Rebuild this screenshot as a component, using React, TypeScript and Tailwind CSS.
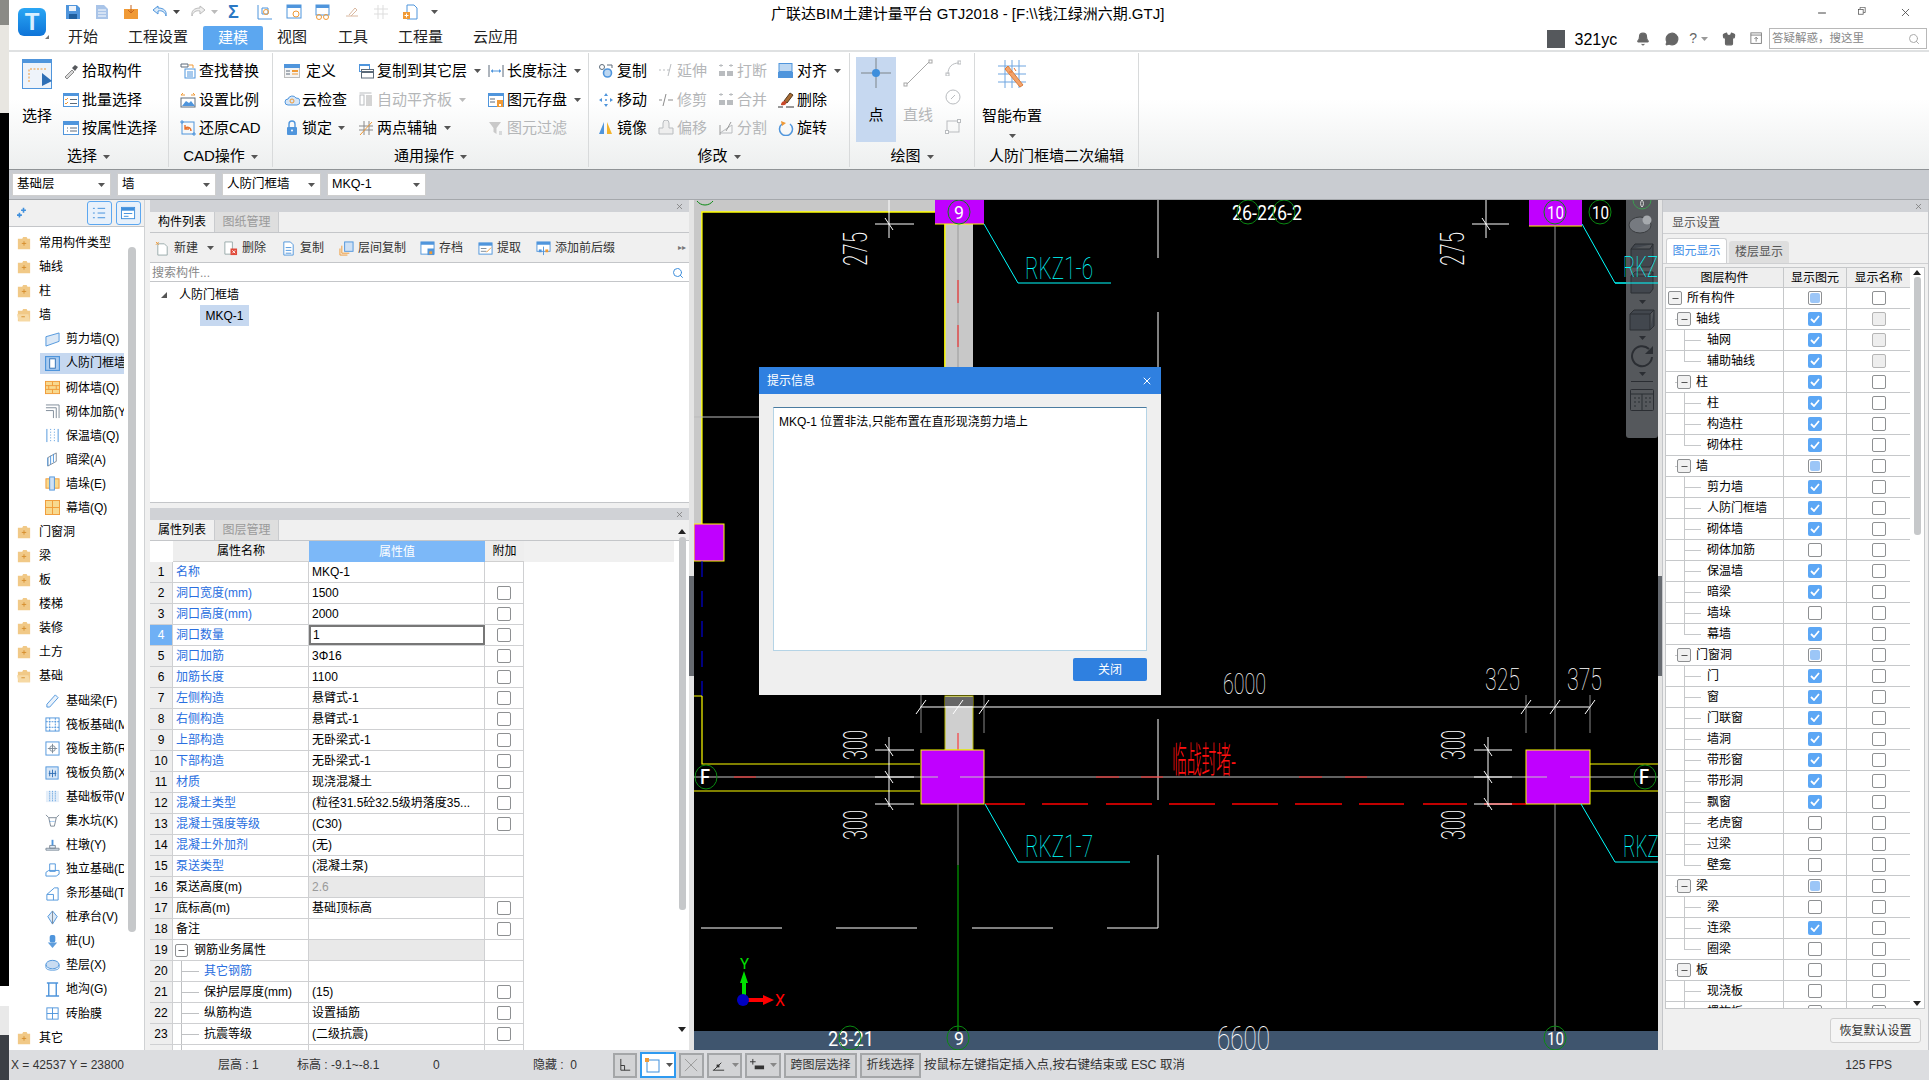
import React from "react"
import { Search, X, Bell, MessageCircle, Shirt, Minus } from "lucide-react"

type P = { children?: React.ReactNode; className?: string }

const Svg = ({ children, s = 16, w, h, vb = "0 0 16 16", className = "" }: P & { s?: number; w?: number; h?: number; vb?: string }) => (
  <svg width={w ?? s} height={h ?? s} viewBox={vb} fill="none" className={`shrink-0 ${className}`}>
    {children}
  </svg>
)

const BL = "#4f95dc"
const OR = "#f09a36"
const GY = "#b9bcbf"
const DK = "#5c6b7a"

const icons: Record<string, React.ReactNode> = {
  pick: <><path d="M2 14l7-7 2 2-7 7z" fill="#d8d8d8" stroke="#8a8a8a" /><path d="M9 5l3-3 3 2-3 4z" fill="#55585c" /></>,
  batch: <><rect x="0.5" y="1.5" width="15" height="13" fill="#fff" stroke={BL} /><rect x="0" y="1" width="16" height="3" fill={BL} /><path d="M2 7l1 1 2-2M2 11l1 1 2-2" stroke={OR} /><path d="M7 7.5h7M7 11.5h7" stroke={DK} /></>,
  attr: <><rect x="0.5" y="1.5" width="15" height="13" fill="#fff" stroke={BL} /><rect x="0" y="1" width="16" height="4" fill={BL} /><path d="M4 8h1M7 8h7M4 11h1M7 11h7" stroke={DK} /></>,
  find: <><path d="M1 1h7v3H1z" stroke={DK} /><path d="M9 2h4v3" stroke={OR} /><rect x="5" y="6" width="10" height="9" fill="#fff" stroke={BL} /><path d="M7 9h6M7 11h6M7 13h6" stroke={BL} /></>,
  scale: <><path d="M1 3h4M1 3l2-2M11 3h4M15 3l-2-2" stroke={OR} /><rect x="1" y="6" width="14" height="9" fill="#fff" stroke={DK} /><path d="M2 14l4-5 3 2 2-2 4 5z" fill={BL} /></>,
  cad: <><rect x="2" y="2" width="12" height="12" stroke={BL} /><path d="M0 2h4M2 0v4M12 14h4M14 12v4" stroke={BL} /><path d="M11 11c0-4-5-5-6-2M5 5v4h4" stroke="#e8702a" strokeWidth="1.4" /></>,
  def: <><rect x="0.5" y="1.5" width="15" height="13" fill="#f4f4f4" stroke="#bcbcbc" /><rect x="0" y="1" width="16" height="4" fill={BL} /><path d="M2 8h4M2 11h4" stroke={DK} /><path d="M8 7h6v2H8z" fill={OR} /><path d="M8 11h6" stroke={OR} /></>,
  cloud: <><path d="M4 13a3 3 0 010-6 4.5 4.5 0 018-1 3.5 3.5 0 011 7z" fill="#d6e6f7" stroke={BL} /><circle cx="8" cy="9" r="2" stroke={OR} /></>,
  lock: <><rect x="3" y="7" width="10" height="8" rx="1" fill={BL} /><path d="M5 7V4a3 3 0 016 0v3" stroke={BL} strokeWidth="1.4" /><circle cx="8" cy="10.5" r="1" fill="#fff" /></>,
  copylayer: <><rect x="1" y="1" width="11" height="8" fill={BL} /><rect x="2" y="3" width="9" height="5" fill="#fff" /><rect x="3.5" y="6.5" width="12" height="8.5" fill="#fff" stroke={DK} /><path d="M3.5 9h12" stroke={DK} strokeWidth="2" /></>,
  align: <><path d="M1.5 1h12" stroke={GY} /><rect x="2" y="3" width="4" height="10" stroke={GY} /><rect x="8" y="3" width="6" height="11" fill="#d4d4d4" /></>,
  axis: <><path d="M1 6h14M1 10h14M6 1v14M11 1v14" stroke="#8a8a8a" /><path d="M2 15L14 2" stroke={OR} /></>,
  dim: <><path d="M1 2v12M15 2v12" stroke={DK} /><path d="M3 8h10" stroke={BL} /><path d="M3 8l2-2v4zM13 8l-2-2v4z" fill={BL} /></>,
  save: <><rect x="0.5" y="1.5" width="15" height="13" fill="#fff" stroke={BL} /><rect x="0" y="1" width="16" height="3" fill={BL} /><path d="M2 7h5M2 10h5" stroke={DK} /><rect x="9" y="8" width="6" height="7" fill={OR} /><rect x="11" y="12" width="2" height="2" fill="#fff" /></>,
  filter: <><path d="M1 2h12L8.5 8v6l-3-2V8z" fill="#c9c9c9" /><path d="M11 12h3M11 14h3" stroke={GY} /></>,
  copy: <><circle cx="4" cy="4" r="2.5" stroke={DK} /><circle cx="9.5" cy="10" r="4" fill="#bcd7f2" stroke={BL} strokeWidth="1.6" /><path d="M9 2h5v3" stroke={DK} /></>,
  move: <><path d="M8 1l2 3H6zM8 15l-2-3h4zM1 8l3-2v4zM15 8l-3 2V6z" fill={BL} /><circle cx="8" cy="8" r="1" fill={BL} /></>,
  mirror: <><path d="M1 14L6 2v12z" fill={BL} /><path d="M9 14V2l5 12z" fill="#f3b32a" /></>,
  extend: <><path d="M1 7h2M5 7h2M9 7h2" stroke={GY} /><path d="M13 1l-3 12" stroke={GY} /></>,
  trim: <><path d="M1 8h3M10 8h5" stroke="#8b8b8b" /><path d="M8 2L5 14" stroke="#8b8b8b" /></>,
  offset: <><path d="M5 8V3a3 3 0 016 0v5h4v6H1V8z" stroke={GY} fill="#eee" /></>,
  brk: <><path d="M3 1v3M1 2.500h4M11 2.500h4M13 1v3" stroke={GY} /><rect x="1" y="8" width="6" height="5" fill={GY} /><rect x="9" y="8" width="6" height="5" fill={GY} /></>,
  split: <><path d="M2 13h12V5L2 13z" stroke={GY} /><path d="M2 15V5M8 11l5-9" stroke="#9a9a9a" /></>,
  alignr: <><rect x="1" y="0.500" width="13" height="8" fill="#bcd7f2" stroke={BL} /><rect x="0" y="9" width="15" height="6" fill={BL} /></>,
  del: <><path d="M6 9l6-8 3 2-6 8z" fill="#a86b34" stroke="#54391e" /><path d="M3 12c1-3 4-4 5-2s-1 4-5 3" fill="#c8482a" /><path d="M0 15h5M8 15h8" stroke="#333" /></>,
  rotate: <><path d="M4 4a6.500 6.500 0 108 0" stroke={BL} strokeWidth="1.5" /><path d="M3 1l5 2-4 3z" fill={OR} /></>,
}

const Ico = ({ n, s = 16 }: { n: string; s?: number }) => <Svg s={s}>{icons[n]}</Svg>

const Caret = ({ c = "#555" }: { c?: string }) => (
  <svg width="7" height="4" viewBox="0 0 7 4" className="shrink-0"><path d="M0 0h7L3.500 4z" fill={c} /></svg>
)

const Rb = ({ icon, label, off, caret, gap = "gap-[3px]" }: { icon: string; label: string; off?: boolean; caret?: boolean; gap?: string }) => (
  <div className={`flex h-[28.5px] items-center ${gap} ${off ? "text-[#b4b6b8]" : "text-black"}`}>
    <Ico n={icon} />
    <span className="whitespace-nowrap">{label}</span>
    {caret && <span className="ml-[4px]"><Caret c={off ? "#bbb" : "#555"} /></span>}
  </div>
)

const Group = ({ w, label, caret = true, children }: P & { w: string; label: string; caret?: boolean }) => (
  <div className={`${w} flex h-[114px] shrink-0 flex-col border-r border-[#d8dadb]`}>
    <div className="flex h-[93px] pt-[4px]">{children}</div>
    <div className="flex h-[21px] items-center justify-center gap-[6px]">
      <span>{label}</span>
      {caret && <Caret />}
    </div>
  </div>
)

const Ribbon = () => (
  <div className="flex h-[118px] items-start bg-linear-to-b from-white from-40% to-[#edefef] pt-[1px] text-[15px] border-b border-[#8f9396]">
    <Group w="w-[160px]" label="选择">
      <div className="ml-[13px] flex w-[41px] flex-col items-start">
        <Svg w={30} h={30} vb="0 0 30 30" className="mt-[2px]">
          <rect x="0.500" y="0.500" width="29" height="29" fill="#eef3fa" stroke={BL} />
          <rect width="30" height="4" fill={BL} />
          <path d="M7 23V10h17" stroke={OR} strokeDasharray="2 1.500" />
          <path d="M20 14v13l10-5z" fill="#2f6fb5" />
        </Svg>
        <span className="mt-[16px]">选择</span>
      </div>
      <div className="flex flex-col">
        <Rb icon="pick" label="拾取构件" />
        <Rb icon="batch" label="批量选择" />
        <Rb icon="attr" label="按属性选择" />
      </div>
    </Group>
    <Group w="w-[104px]" label="CAD操作">
      <div className="ml-[11px] flex flex-col">
        <Rb icon="find" label="查找替换" />
        <Rb icon="scale" label="设置比例" />
        <Rb icon="cad" label="还原CAD" />
      </div>
    </Group>
    <Group w="w-[316px]" label="通用操作">
      <div className="ml-[11px] flex w-[74px] flex-col">
        <Rb icon="def" label="定义" gap="gap-[6px]" />
        <Rb icon="cloud" label="云检查" gap="gap-[2px]" />
        <Rb icon="lock" label="锁定" gap="gap-[2px]" caret />
      </div>
      <div className="flex w-[130px] flex-col">
        <Rb icon="copylayer" label="复制到其它层" caret />
        <Rb icon="align" label="自动平齐板" off caret />
        <Rb icon="axis" label="两点辅轴" caret />
      </div>
      <div className="flex flex-col">
        <Rb icon="dim" label="长度标注" caret />
        <Rb icon="save" label="图元存盘" caret />
        <Rb icon="filter" label="图元过滤" off />
      </div>
    </Group>
    <Group w="w-[261px]" label="修改">
      <div className="ml-[9px] flex">
        <div className="flex w-[60px] flex-col">
          <Rb icon="copy" label="复制" />
          <Rb icon="move" label="移动" />
          <Rb icon="mirror" label="镜像" />
        </div>
        <div className="flex w-[60px] flex-col">
          <Rb icon="extend" label="延伸" off />
          <Rb icon="trim" label="修剪" off />
          <Rb icon="offset" label="偏移" off />
        </div>
        <div className="flex w-[60px] flex-col">
          <Rb icon="brk" label="打断" off />
          <Rb icon="brk" label="合并" off />
          <Rb icon="split" label="分割" off />
        </div>
        <div className="flex flex-col">
          <Rb icon="alignr" label="对齐" caret />
          <Rb icon="del" label="删除" />
          <Rb icon="rotate" label="旋转" />
        </div>
      </div>
    </Group>
    <Group w="w-[125px]" label="绘图">
      <div className="ml-[6px] flex h-[85px] w-[40px] flex-col items-center bg-[#c6d8f0] pt-[1px]">
        <Svg w={30} h={30} vb="0 0 30 30">
          <path d="M15 0v30M0 15h30" stroke="#7d8489" />
          <circle cx="15" cy="15" r="4" fill="#3f8fdc" />
        </Svg>
        <span className="mt-[16px]">点</span>
      </div>
      <div className="ml-[7px] flex w-[30px] flex-col items-center text-[#b4b6b8]">
        <Svg w={30} h={30} vb="0 0 30 30" className="mt-[1px]">
          <path d="M3 27L27 3" stroke="#a8a8a8" />
          <rect x="1" y="25" width="3" height="3" stroke="#a8a8a8" fill="#fff" />
          <rect x="26" y="2" width="3" height="3" stroke="#a8a8a8" fill="#fff" />
        </Svg>
        <span className="mt-[16px] whitespace-nowrap">直线</span>
      </div>
      <div className="ml-[12px] flex flex-col gap-[13px] pt-[3px]">
        <Svg><path d="M3 14C3 7 7 3 14 3" stroke={GY} /><rect x="1" y="13" width="3" height="3" stroke={GY} /><rect x="13" y="1" width="3" height="3" stroke={GY} /></Svg>
        <Svg><circle cx="8" cy="8" r="7" stroke={GY} /><path d="M6 10l4-4" stroke={GY} /></Svg>
        <Svg><rect x="2" y="3" width="12" height="11" stroke={GY} /><rect x="0.500" y="12.500" width="3" height="3" fill="#fff" stroke={GY} /><rect x="12.500" y="1.500" width="3" height="3" fill="#fff" stroke={GY} /></Svg>
      </div>
    </Group>
    <Group w="w-[164px]" label="人防门框墙二次编辑" caret={false}>
      <div className="ml-[7px] flex w-[60px] flex-col items-center">
        <Svg w={30} h={30} vb="0 0 30 30" className="mt-[2px]">
          <path d="M1 7h28M1 15h28M1 23h28M8 1v28M15 1v28M22 1v28" stroke="#6fa5e0" />
          <path d="M8 10l15 18 3-2L11 7z" fill="#f3a26a" stroke="#d97c3a" />
          <path d="M12 13h3M17 9l2 3" stroke="#e8702a" />
        </Svg>
        <span className="mt-[16px] whitespace-nowrap">智能布置</span>
        <span className="mt-[6px]"><Caret /></span>
      </div>
    </Group>
  </div>
)

const quick: React.ReactNode[] = [
  <Svg key="a"><path d="M1 1h11l3 3v11H1z" fill={BL} /><rect x="4" y="2" width="7" height="5" fill="#eef3fa" /><rect x="4" y="10" width="8" height="5" fill="#1f5f9f" /></Svg>,
  <Svg key="b"><path d="M2 1h8l4 4v10H2z" fill="#a9c4e8" /><path d="M4 6h8M4 9h8M4 12h8" stroke="#fff" /></Svg>,
  <Svg key="c"><rect x="1" y="5" width="14" height="10" fill={OR} /><path d="M8 1v8M5 6l3 3 3-3" stroke="#c7641c" /></Svg>,
]

const Header = () => (
  <div className="relative flex h-[52px] shrink-0 bg-white border-b-2 border-[#dfe1e2]">
    <div className="relative ml-[9px] mt-[8px] h-[28px] w-[28px] rounded-[6px] bg-linear-to-b from-[#2aa6f4] to-[#0f74d8] flex items-center justify-center">
      <span className="text-[24px] font-bold leading-none text-[#d7efff]">T</span>
      <span className="absolute -bottom-[3px] -right-[3px] border-[2px] border-transparent border-b-[#777] border-r-[#777]" />
    </div>
    <div className="ml-[19px] flex flex-col">
      <div className="flex h-[28px] items-center pb-[2px]">
        <div className="flex w-[29px]">{quick[0]}</div>
        <div className="flex w-[29px]">{quick[1]}</div>
        <div className="flex w-[29px]">{quick[2]}</div>
        <div className="flex w-[38px] items-center gap-[5px]">
          <Svg><path d="M6 2L1 6l5 4V7c4-1 7 1 8 5 1-5-2-8-8-8z" stroke={BL} fill="#dcebf9" /></Svg>
          <Caret c="#444" />
        </div>
        <div className="flex w-[29px] items-center gap-[5px]">
          <Svg><path d="M10 2l5 4-5 4V7C6 6 3 8 2 12 1 7 4 4 10 4z" stroke="#bbb" fill="#eee" /></Svg>
          <Caret c="#bbb" />
        </div>
        <div className="ml-[9px] flex w-[21px] text-[18px] font-bold leading-none text-[#2b78c4]">Σ</div>
        <div className="ml-[8px] flex items-center gap-[13px]">
          <Svg><path d="M1 1v14h14" stroke={BL} /><path d="M5 4h6v6H5z" stroke={BL} /><circle cx="9" cy="8" r="2.500" stroke={OR} /></Svg>
          <Svg><rect x="1" y="1" width="14" height="13" stroke={BL} /><rect x="1" y="1" width="14" height="3" fill={BL} /><circle cx="10" cy="10" r="3" stroke={OR} /></Svg>
          <Svg><rect x="1" y="1" width="13" height="10" stroke={BL} /><rect x="1" y="1" width="13" height="3" fill={BL} /><circle cx="4" cy="13" r="2.500" stroke={OR} /><circle cx="11" cy="13" r="2.500" stroke={OR} /></Svg>
          <Svg><path d="M2 12h12M5 11l6-7 2 2-6 6" stroke="#d9b8a0" /></Svg>
          <Svg><path d="M1 5h14M1 10h14M5 1v14M10 1v14" stroke="#ddd" /></Svg>
          <Svg><path d="M5 1h7l3 3v11H5z" stroke={BL} fill="#fff" /><rect x="1" y="8" width="7" height="7" fill={OR} /><path d="M4.500 9.500v4M2.500 11.500h4" stroke="#fff" /></Svg>
          <Caret c="#555" />
        </div>
      </div>
      <div className="flex h-[24px] items-end text-[15px] text-[#222]">
        <span className="ml-[3px] w-[60px] pb-[2px]">开始</span>
        <span className="w-[75px] pb-[2px]">工程设置</span>
        <span className="flex h-[24px] w-[60px] items-center justify-center rounded-t-[2px] bg-[#5ca7f0] text-white">建模</span>
        <span className="ml-[14px] w-[61px] pb-[2px]">视图</span>
        <span className="w-[60px] pb-[2px]">工具</span>
        <span className="w-[75px] pb-[2px]">工程量</span>
        <span className="pb-[2px]">云应用</span>
      </div>
    </div>
    <div className="absolute left-[762px] top-[4px] text-[15px] leading-[20px] text-black whitespace-nowrap">广联达BIM土建计量平台 GTJ2018 - [F:\\钱江绿洲六期.GTJ]</div>
    <div className="absolute right-[17px] top-[6px] flex items-center gap-[30px] text-[#444]">
      <Minus size={12} strokeWidth={2} />
      <Svg s={11}><rect x="0.500" y="3.500" width="7" height="7" stroke="#444" /><path d="M3 3V0.500h7.500V8H8" stroke="#444" /></Svg>
      <X size={13} strokeWidth={1.5} />
    </div>
    <div className="absolute right-[2px] top-[28px] flex items-center">
      <div className="mr-[5px] flex h-[20px] items-center gap-[4px]">
        <span className="mr-[6px] h-[18px] w-[18px] bg-[#55585c]" />
        <span className="mr-[15px] pt-[2px] text-[16px] leading-none">321yc</span>
        <Bell size={14} fill="#666" stroke="#666" className="mr-[11px]" />
        <MessageCircle size={14} fill="#666" stroke="#666" className="mr-[6px]" />
        <span className="text-[14px] text-[#666]">?</span>
        <span className="mr-[10px]"><Caret c="#999" /></span>
        <Shirt size={14} fill="#666" stroke="#666" className="mr-[10px]" />
        <Svg s={14}><rect x="1" y="1" width="12" height="12" stroke="#777" /><path d="M1 3.500h12M7 11V6M5 8l2-2 2 2" stroke="#777" /></Svg>
      </div>
      <div className="flex h-[21px] w-[158px] items-center border border-[#b8b8b8] bg-white pl-[2px] pr-[6px] text-[11.5px] text-[#888]">
        <span className="flex-1 whitespace-nowrap">答疑解惑，搜这里</span>
        <Search size={12} stroke="#aaa" />
      </div>
    </div>
  </div>
)

const Drop = ({ t }: { t: string }) => (
  <div className="flex h-[23px] w-[99px] items-center justify-between border border-[#cfcfcf] bg-white px-[4px] pr-[5px] text-[12.5px]">
    <span>{t}</span>
    <Caret c="#555" />
  </div>
)

const Toolbar = () => (
  <div className="flex h-[30px] shrink-0 items-center gap-[6px] bg-[#c9ccd1] pl-[3px] border-b border-[#a5a8ac]">
    {["基础层", "墙", "人防门框墙", "MKQ-1"].map(t => <Drop key={t} t={t} />)}
  </div>
)

const Folder = ({ open }: { open?: boolean }) => (
  <Svg s={14}>
    <path d="M1 3h5l1-2h4l1 2h3v12H1z" fill="#f1c987" />
    {open ? <path d="M0 7h13l2 8H2z" fill="#f6d9a4" /> : null}
    <path d={open ? "M5 10h4" : "M8 6v5M5.500 8.500h5"} stroke="#d48c2a" />
  </Svg>
)

const childIcons: Record<string, React.ReactNode> = {
  wall: <><path d="M1 5l14-4v9L1 15z" fill="#dbe8f6" stroke={BL} /></>,
  rf: <><rect x="0.500" y="0.500" width="15" height="15" fill="#aacbf0" stroke={BL} strokeWidth="1.500" /><rect x="5" y="3" width="6" height="10" fill="#fff" stroke="#2f6fb5" /></>,
  brick: <><rect x="0.500" y="1.500" width="15" height="13" fill="#f8d98f" stroke={OR} /><path d="M1 6h14M1 10h14M8 2v4M4 6v4M12 6v4M8 10v4" stroke={OR} /></>,
  bar: <><path d="M1 1h14v14M1 4h11v11M1 7h8v8" stroke="#7d8a96" /></>,
  ins: <><path d="M2 1v14M14 1v14" stroke={BL} /><path d="M6 1v14M10 1v14" stroke={BL} strokeDasharray="1 2" /></>,
  beam: <><path d="M3 6l9-5v9l-9 5z" fill="#fff" stroke="#7d8a96" /><path d="M3 6v9M6 4v9M9 2v9" stroke={BL} /></>,
  pier: <><rect x="1" y="3" width="14" height="10" fill="#f8d98f" stroke={OR} /><rect x="5" y="1" width="5" height="14" fill="#cfe1f5" stroke={BL} /></>,
  curtain: <><rect x="0.500" y="0.500" width="15" height="15" fill="#f8d98f" stroke={OR} /><path d="M8 1v14M1 8h14" stroke={OR} /></>,
  fb: <><path d="M2 12L11 2l3 3-9 10H2z" fill="#eaf2fb" stroke={BL} /></>,
  raft: <><rect x="1" y="1" width="14" height="14" stroke={BL} /><path d="M1 5h14M1 11h14M5 1v14M11 1v14" stroke={BL} strokeDasharray="2 1" /></>,
  raftm: <><rect x="1" y="1" width="14" height="14" stroke={BL} /><circle cx="8" cy="8" r="3" stroke="#7d8a96" /><path d="M8 3v10M3 8h10" stroke="#7d8a96" /></>,
  raftn: <><rect x="1" y="2" width="13" height="13" fill="#d8e7f7" stroke={BL} /><path d="M5 6v6M8 5v8M11 6v6M4 9h8" stroke="#2f6fb5" /></>,
  band: <><rect x="1" y="2" width="14" height="12" fill="#e4eef9" /><path d="M5 2v12M8 2v12M11 2v12" stroke={BL} strokeDasharray="1 1" /></>,
  sump: <><path d="M1 2l3 3h8l3-3M4 5l2 9h4l2-9" stroke="#7d8a96" /><path d="M5 9h6" stroke={BL} strokeDasharray="1 1" /></>,
  ped: <><path d="M1 12h14v2H1zM5 9h6v3H5z" stroke="#7d8a96" fill="#e4eef9" /><path d="M8 3v6" stroke={BL} strokeWidth="2" /></>,
  iso: <><path d="M5 2h6v8H5zM1 11l3-2h11v4l-3 2H1z" fill="#fff" stroke={BL} /></>,
  strip: <><path d="M2 15V9l8-7h4v13zM2 9h7v6" fill="#fff" stroke={BL} /></>,
  cap: <><path d="M8 1l5 6-5 8-5-8z" fill="#dbe8f6" stroke={BL} /><path d="M8 1v14" stroke="#7d8a96" /></>,
  pile: <><rect x="5" y="1" width="6" height="8" rx="2" fill={BL} /><path d="M3 9h10L8 15z" fill="#5e9ddc" /></>,
  cush: <><ellipse cx="8" cy="7" rx="7" ry="4.500" fill="#c9dcf1" stroke={BL} /><path d="M1 7v3c0 2 3 3 7 3s7-1 7-3V7" stroke={BL} /></>,
  ditch: <><path d="M2 1h12M1 15h14M4 1v14M12 1v14" stroke={BL} strokeWidth="1.500" /></>,
  brickm: <><rect x="2" y="2" width="12" height="12" stroke={BL} /><path d="M8 2v12M2 8h12" stroke={BL} /></>,
}

const leftTree: { t: string; i?: string; open?: boolean; sel?: boolean }[] = [
  { t: "常用构件类型" }, { t: "轴线" }, { t: "柱" }, { t: "墙", open: true },
  { t: "剪力墙(Q)", i: "wall" }, { t: "人防门框墙", i: "rf", sel: true }, { t: "砌体墙(Q)", i: "brick" }, { t: "砌体加筋(Y", i: "bar" },
  { t: "保温墙(Q)", i: "ins" }, { t: "暗梁(A)", i: "beam" }, { t: "墙垛(E)", i: "pier" }, { t: "幕墙(Q)", i: "curtain" },
  { t: "门窗洞" }, { t: "梁" }, { t: "板" }, { t: "楼梯" }, { t: "装修" }, { t: "土方" }, { t: "基础", open: true },
  { t: "基础梁(F)", i: "fb" }, { t: "筏板基础(M", i: "raft" }, { t: "筏板主筋(R", i: "raftm" }, { t: "筏板负筋(X", i: "raftn" },
  { t: "基础板带(W", i: "band" }, { t: "集水坑(K)", i: "sump" }, { t: "柱墩(Y)", i: "ped" }, { t: "独立基础(D", i: "iso" },
  { t: "条形基础(T", i: "strip" }, { t: "桩承台(V)", i: "cap" }, { t: "桩(U)", i: "pile" }, { t: "垫层(X)", i: "cush" },
  { t: "地沟(G)", i: "ditch" }, { t: "砖胎膜", i: "brickm" }, { t: "其它" },
]

const LeftPanel = () => (
  <div className="relative flex w-[136px] shrink-0 flex-col overflow-hidden bg-white text-[12px] border-r border-[#d0d2d4]">
    <div className="flex h-[27px] shrink-0 items-center border-b border-[#c4c6c9] bg-[#f0f0f0] pl-[8px]">
      <Svg s={13}><path d="M8 1v6M5 4h6M3 7v6M0 10h6" stroke="#3f8fdc" strokeWidth="2" /></Svg>
      <div className="ml-[57px] flex h-[24px] w-[25px] items-center justify-center rounded-[3px] border border-[#5ca7f0] bg-[#e8f1fb]">
        <Svg s={15}><path d="M1 2.500h2M6 2.500h8M1 7.500h2M6 7.500h8M1 12.500h2M6 12.500h8" stroke="#3f8fdc" /></Svg>
      </div>
      <div className="ml-[4px] flex h-[24px] w-[25px] items-center justify-center rounded-[3px] border border-[#5ca7f0] bg-[#e8f1fb]">
        <Svg s={15}><rect x="0.500" y="1.500" width="14" height="12" fill="#fff" stroke="#3f8fdc" /><rect x="1" y="2" width="13" height="3" fill="#3f8fdc" /><path d="M3 8h9M3 11h5" stroke="#3f8fdc" /></Svg>
      </div>
    </div>
    <div className="flex flex-col pt-[4px]">
      {leftTree.map((r, k) =>
        r.i ? (
          <div key={k} className="flex h-[24.09px] items-center pl-[31px]">
            <div className={`flex h-[21px] w-[84px] items-center gap-[6px] overflow-hidden pl-[5px] ${r.sel ? "bg-[#c6d8f0]" : ""}`}>
              <Svg s={15}>{childIcons[r.i]}</Svg>
              <span className="whitespace-nowrap">{r.t}</span>
            </div>
          </div>
        ) : (
          <div key={k} className="flex h-[24.09px] items-center gap-[8px] pl-[8px]">
            <Folder open={r.open} />
            <span>{r.t}</span>
          </div>
        ),
      )}
    </div>
    <div className="absolute left-[119px] top-[47px] h-[685px] w-[8px] rounded-[4px] bg-[#c6c8ca]" />
  </div>
)

const PanelBar = ({ h }: { h: string }) => (
  <div className={`${h} flex shrink-0 items-center justify-end bg-[#d0d2d6] pr-[5px]`}>
    <X size={9} strokeWidth={2} stroke="#777" />
  </div>
)

const PanelTabs = ({ a, b, h }: { a: string; b: string; h: string }) => (
  <div className={`${h} flex shrink-0 border-b border-[#c4c6c9] bg-[#f0f0f0] text-[12px]`}>
    <div className="flex w-[65px] items-center justify-center border-r border-[#c9cbce]">{a}</div>
    <div className="flex w-[64px] items-center justify-center border-r border-[#c9cbce] bg-[#dedede] text-[#9a9a9a]">{b}</div>
  </div>
)

const compTools: { t: string; w: string; i: React.ReactNode; caret?: boolean }[] = [
  { t: "新建", w: "w-[68px]", caret: true, i: <><path d="M3 3h7l3 3v9H3z" fill="#fff" stroke="#9aa" /><path d="M1 1l3 3M4 1L1 4" stroke={OR} /></> },
  { t: "删除", w: "w-[58px]", i: <><path d="M2 1h8v13H2z" fill="#fff" stroke="#9aa" /><rect x="8" y="8" width="7" height="7" fill="#e04a3a" /><path d="M10 10l3 3M13 10l-3 3" stroke="#fff" /></> },
  { t: "复制", w: "w-[58px]", i: <><path d="M3 1h7l3 3v11H3z" fill="#fff" stroke={BL} /><path d="M5 7h6M5 10h6M5 13h6" stroke={BL} /></> },
  { t: "层间复制", w: "w-[81px]", i: <><rect x="6" y="1" width="9" height="10" fill="#cfe1f5" stroke={BL} /><path d="M3 5v8h8M1 8v7h8" stroke={OR} /></> },
  { t: "存档", w: "w-[58px]", i: <><rect x="1" y="1" width="14" height="13" fill="#fff" stroke={BL} /><rect x="1" y="1" width="14" height="3" fill={BL} /><rect x="8" y="8" width="7" height="7" fill={BL} /><rect x="10" y="11" width="3" height="3" fill={OR} /></> },
  { t: "提取", w: "w-[58px]", i: <><rect x="1" y="2" width="14" height="12" fill="#fff" stroke={BL} /><rect x="1" y="2" width="14" height="3" fill={BL} /><path d="M3 8h6M3 11h6" stroke="#7d8a96" /><path d="M9 12l5-5" stroke={OR} /></> },
  { t: "添加前后缀", w: "w-[100px]", i: <><rect x="1" y="1" width="14" height="10" fill="#fff" stroke={BL} /><rect x="1" y="1" width="14" height="3" fill={BL} /><path d="M8 6v9" stroke={BL} /><rect x="3" y="9" width="3" height="3" fill={BL} /><rect x="10" y="9" width="3" height="3" fill={OR} /></> },
]

const CompPanel = () => (
  <div className="flex h-[303px] shrink-0 flex-col border-b border-[#c4c6c9]">
    <PanelBar h="h-[12px]" />
    <PanelTabs a="构件列表" b="图纸管理" h="h-[21px]" />
    <div className="flex h-[30px] shrink-0 items-center border-b border-[#c4c6c9] bg-[#f0f0f0] pl-[5px] pt-[1px] text-[12px] text-[#333]">
      {compTools.map(c => (
        <div key={c.t} className={`flex items-center gap-[4px] ${c.w}`}>
          <Svg s={15}>{c.i}</Svg>
          <span>{c.t}</span>
          {c.caret && <span className="ml-[5px]"><Caret /></span>}
        </div>
      ))}
      <span className="ml-auto mr-[3px] text-[8px] text-[#777]">▸▸</span>
    </div>
    <div className="flex h-[19px] shrink-0 items-center justify-between border-b border-[#c4c6c9] bg-white pl-[2px] pr-[5px] pt-[2px] text-[12px] text-[#888]">
      <span>搜索构件...</span>
      <Search size={12} stroke="#3f8fdc" strokeWidth={2} />
    </div>
    <div className="flex flex-1 flex-col bg-white pt-[2px] text-[12px]">
      <div className="flex h-[21px] items-center pl-[11px]">
        <svg width="6" height="6" viewBox="0 0 6 6"><path d="M6 0v6H0z" fill="#555" /></svg>
        <span className="ml-[12px]">人防门框墙</span>
      </div>
      <div className="ml-[50px] flex h-[21px] w-[49px] items-center justify-center bg-[#c6d8f0]">MKQ-1</div>
    </div>
  </div>
)

const props: { t: string; v: string; c?: boolean; k?: boolean; lvl?: number; g?: boolean; box?: boolean }[] = [
  { t: "名称", v: "MKQ-1" },
  { t: "洞口宽度(mm)", v: "1500", c: true },
  { t: "洞口高度(mm)", v: "2000", c: true },
  { t: "洞口数量", v: "1", c: true },
  { t: "洞口加筋", v: "3Φ16", c: true },
  { t: "加筋长度", v: "1100", c: true },
  { t: "左侧构造", v: "悬臂式-1", c: true },
  { t: "右侧构造", v: "悬臂式-1", c: true },
  { t: "上部构造", v: "无卧梁式-1", c: true },
  { t: "下部构造", v: "无卧梁式-1", c: true },
  { t: "材质", v: "现浇混凝土", c: true },
  { t: "混凝土类型", v: "(粒径31.5砼32.5级坍落度35...", c: true },
  { t: "混凝土强度等级", v: "(C30)", c: true },
  { t: "混凝土外加剂", v: "(无)" },
  { t: "泵送类型", v: "(混凝土泵)" },
  { t: "泵送高度(m)", v: "2.6", k: true, g: true },
  { t: "底标高(m)", v: "基础顶标高", c: true, k: true },
  { t: "备注", v: "", c: true, k: true },
  { t: "钢筋业务属性", v: "", k: true, g: true, box: true },
  { t: "其它钢筋", v: "", lvl: 1 },
  { t: "保护层厚度(mm)", v: "(15)", c: true, k: true, lvl: 1 },
  { t: "纵筋构造", v: "设置插筋", c: true, k: true, lvl: 1 },
  { t: "抗震等级", v: "(二级抗震)", c: true, k: true, lvl: 1 },
  { t: "", v: "", lvl: 1 },
]

const Cb = ({ dim }: { dim?: boolean }) => (
  <span className={`h-[14px] w-[14px] rounded-[2px] border ${dim ? "border-[#b5b5b5] bg-[#eeeeee]" : "border-[#8e9092] bg-white"}`} />
)

const PropPanel = () => (
  <div className="relative flex min-h-0 flex-1 flex-col">
    <div className="h-[5px] shrink-0 bg-[#f0f0f0]" />
    <PanelBar h="h-[12px]" />
    <PanelTabs a="属性列表" b="图层管理" h="h-[21px]" />
    <div className="flex h-[21px] shrink-0 bg-white text-[12px]">
      <span className="w-[23px]" />
      <span className="flex w-[136px] items-center justify-center border-b border-[#d0d0d0] bg-[#eeeeee]">属性名称</span>
      <span className="flex w-[176px] items-center justify-center bg-[#7cb8f8] text-white">属性值</span>
      <span className="flex w-[39px] items-center justify-center border-b border-[#d0d0d0] bg-[#eeeeee]">附加</span>
      <span className="w-[150px] bg-[#f0f0f0]" />
    </div>
    <div className="min-h-0 flex-1 overflow-hidden bg-white text-[12px]">
      {props.map((p, k) => (
        <div key={k} className="flex h-[21px] w-[374px] border-b border-[#cfd0d2]">
          <span className={`flex w-[23px] items-center justify-center border-r border-[#cfd0d2] ${k === 3 ? "bg-[#6fb0f5] text-white" : "bg-[#eeeeee]"}`}>{k + 1}</span>
          <span className={`relative flex w-[136px] items-center border-r border-[#cfd0d2] ${p.k ? "text-black" : "text-[#2a6fe0]"} ${p.box ? "pl-[2px]" : p.lvl ? "pl-[31px]" : "pl-[3px]"}`}>
            {p.lvl ? <>
              <span className="absolute left-[8px] top-0 h-full w-px bg-[#bfc1c3]" />
              <span className="absolute left-[9px] top-[10px] h-px w-[17px] bg-[#bfc1c3]" />
            </> : null}
            {p.box && <span className="mr-[6px] flex h-[13px] w-[13px] items-center justify-center rounded-[2px] border border-[#8e9092] text-[#333]"><Minus size={9} /></span>}
            <span className="whitespace-nowrap">{p.t}</span>
          </span>
          <span className={`flex w-[176px] items-center whitespace-nowrap ${k === 3 ? "border-2 border-[#777] pl-[2px]" : "border-r border-[#cfd0d2] pl-[3px]"} ${p.g ? "bg-[#e9e9e9] text-[#9a9a9a]" : ""}`}>{p.v}</span>
          <span className="flex w-[39px] items-center justify-center border-r border-[#cfd0d2]">{p.c && <Cb />}</span>
        </div>
      ))}
    </div>
    <div className="absolute left-[528px] top-[26px] flex h-[503px] w-[8px] flex-col items-center">
      <svg width="8" height="5" viewBox="0 0 8 5" className="shrink-0"><path d="M4 0l4 5H0z" fill="#222" /></svg>
      <span className="mt-[3px] h-[373px] w-[7px] shrink-0 rounded-[3px] bg-[#c6c8ca]" />
      <svg width="8" height="5" viewBox="0 0 8 5" className="mt-auto shrink-0"><path d="M4 5l4-5H0z" fill="#222" /></svg>
    </div>
  </div>
)

const CAD = ({ x, y, s, len, c = "#fff", w = 100, rot, t, f = "Roboto" }: { x: number; y: number; s: number; len: number; c?: string; w?: number; rot?: boolean; t: string; f?: string }) => (
  <text
    transform={`translate(${x},${y})${rot ? " rotate(-90)" : ""}`}
    fontFamily={f}
    fontWeight={w}
    fontSize={s}
    fill={c}
    textLength={len}
    lengthAdjust="spacingAndGlyphs"
  >
    {t}
  </text>
)

const Tick = ({ x, y }: { x: number; y: number }) => <path d={`M${x - 5} ${y + 7}L${x + 5} ${y - 7}`} stroke="#fff" />

const Cross = ({ x, y, x1, x2, y1, y2 }: { x: number; y: number; x1: number; x2: number; y1: number; y2: number }) => (
  <g stroke="#fff">
    <path d={`M${x} ${y1}V${y2}M${x1} ${y}H${x2}`} />
    <path d={`M${x - 4} ${y - 6}L${x + 4} ${y + 6}`} />
  </g>
)

const Circ = ({ x, y, rx = 11, ry = 12 }: { x: number; y: number; rx?: number; ry?: number }) => (
  <ellipse cx={x} cy={y} rx={rx} ry={ry} stroke="#0a8a12" strokeWidth="1" fill="none" />
)

const Canvas = () => (
  <div className="relative w-[964px] shrink-0 overflow-hidden bg-black">
    <svg className="absolute inset-0" width="964" height="850" viewBox="694 200 964 850">
      {/* walls and slab edges, top */}
      <rect x="694" y="200" width="241" height="12" fill="#c8c8c8" />
      <rect x="694" y="200" width="8" height="324" fill="#c8c8c8" />
      <path d="M702 524V212H945V367" stroke="#ffff00" strokeWidth="1.500" fill="none" />
      <rect x="702.800" y="213" width="241" height="311" fill="#000" />
      <rect x="945" y="224" width="28" height="146" fill="#c8c8c8" />
      <path d="M945 212V370" stroke="#ffff00" />
      <path d="M958 224V370" stroke="#9a9a9a" />
      <path d="M958 280V303M958 325V347" stroke="#ff2020" />
      <rect x="935" y="200" width="49" height="24" fill="#c000ff" />
      <path d="M935 224H984" stroke="#ffff00" />
      <Circ x={959} y={212} rx={11} />
      <CAD x={954} y={219} s={19} len={10} w={400} t="9" />
      <rect x="1529" y="200" width="53" height="26" fill="#c000ff" />
      <path d="M1529 226H1582" stroke="#ffff00" />
      <path d="M1555 226V1050" stroke="#9a9a9a" />
      <Circ x={1555} y={212} />
      <CAD x={1547} y={219} s={19} len={17} w={400} t="10" />
      <Circ x={1600} y={212} />
      <CAD x={1592} y={219} s={19} len={17} w={400} t="10" />
      <path d="M697 201a10 10 0 0016 0" stroke="#0a8a12" fill="none" />
      <Cross x={889} y={224} x1={875} x2={914} y1={200} y2={238} />
      <Cross x={1486} y={224} x1={1472} x2={1509} y1={200} y2={238} />
      <CAD x={867} y={266} s={33} len={34} t="275" rot w={200} />
      <CAD x={1464} y={266} s={33} len={34} t="275" rot w={200} />
      <path d="M984 224L1018 283H1111" stroke="#00ffff" fill="none" />
      <CAD x={1025} y={279} s={31} len={68} c="#00ffff" t="RKZ1-6" />
      <path d="M1158 200V258M1158 312V367M1158 719V800M1158 855V928M701 928H782M836 928H917M972 928H1053M1107 928H1158" stroke="#fff" fill="none" />
      <CAD x={1232} y={220} s={21} len={70} w={400} t="26-226-2" />
      <Circ x={1248} y={212} rx={11} ry={12} />
      <Circ x={1284} y={212} rx={11} ry={12} />
      <path d="M694 417H759" stroke="#bbb" />
      {/* left edge column and axis */}
      <rect x="694" y="524" width="30" height="37" fill="#c000ff" stroke="#ffff00" />
      <path d="M702 561V696" stroke="#0000ff" strokeDasharray="16 14" />
      <path d="M702 696V764H920M694 791H920" stroke="#ffff00" fill="none" strokeWidth="1.200" />
      <path d="M694 696H702" stroke="#ffff00" />
      <path d="M1590 764H1658M1590 791H1658" stroke="#ffff00" />
      {/* lower wall and columns */}
      <rect x="945" y="696" width="28" height="54" fill="#cfcfcf" stroke="#b8b800" />
      <rect x="945" y="697" width="28" height="9" fill="#666" />
      <path d="M958 733V750" stroke="#ff2020" />
      <path d="M694 777H1658" stroke="#c4c4c4" />
      <path d="M734 777H756M1096 777H1119M1141 777H1163M1299 777H1322M1345 777H1367" stroke="#ff2020" />
      <rect x="921" y="750" width="63" height="54" fill="#c000ff" stroke="#ffff00" />
      <rect x="1526" y="750" width="64" height="54" fill="#c000ff" stroke="#ffff00" />
      <path d="M921 777H938M960 777H984M1526 777H1547M1570 777H1590" stroke="#c4c4c4" />
      <path d="M985 804H1025M1042 804H1088M1106 804H1152M1169 804H1215M1232 804H1278M1295 804H1342M1359 804H1404M1423 804H1467M1484 804H1526" stroke="#ff0000" strokeWidth="1.500" />
      {/* dimension lines */}
      <path d="M920 707H1590" stroke="#fff" strokeWidth="1.200" />
      <path d="M921 695V733M984 695V733M1526 695V733M1590 695V733" stroke="#888" />
      <Tick x={921} y={707} /><Tick x={958} y={707} /><Tick x={984} y={707} />
      <Tick x={1526} y={707} /><Tick x={1555} y={707} /><Tick x={1590} y={707} />
      <CAD x={1223} y={694} s={30} len={43} t="6000" />
      <CAD x={1485} y={690} s={32} len={35} t="325" />
      <CAD x={1567} y={690} s={32} len={35} t="375" />
      <path d="M889 737V807M875 750H914M875 777H914M875 804H914" stroke="#fff" />
      <path d="M885 744l8 12M885 771l8 12M885 798l8 12" stroke="#fff" />
      <path d="M1488 737V807M1474 750H1512M1474 777H1512M1474 804H1512" stroke="#fff" />
      <path d="M1484 744l8 12M1484 771l8 12M1484 798l8 12" stroke="#fff" />
      <CAD x={867} y={760} s={33} len={30} t="300" rot w={200} />
      <CAD x={867} y={840} s={33} len={30} t="300" rot w={200} />
      <CAD x={1465} y={760} s={33} len={30} t="300" rot w={200} />
      <CAD x={1465} y={840} s={33} len={30} t="300" rot w={200} />
      <Circ x={706} y={777} rx={11} ry={12} />
      <CAD x={700} y={784} s={20} len={10} w={500} t="F" />
      <Circ x={1645} y={777} rx={11} ry={12} />
      <CAD x={1639} y={784} s={20} len={10} w={500} t="F" />
      <CAD x={1172} y={773} s={36} len={64} c="#ff1010" f="Noto Sans CJK SC" w={300} t="临战封堵-" />
      <path d="M985 804L1018 862H1130" stroke="#00ffff" fill="none" />
      <CAD x={1025} y={857} s={31} len={68} c="#00ffff" t="RKZ1-7" />
      <path d="M958 804V865" stroke="#9a9a9a" />
      <path d="M958 865V1031" stroke="#00c000" />
      {/* coordinate axes */}
      <path d="M744 1000V982" stroke="#00e000" strokeWidth="4" />
      <path d="M744 971l-4 12h8z" fill="#00e000" />
      <path d="M746 1000H766" stroke="#ff0000" strokeWidth="4" />
      <path d="M774 1000l-11-5v10z" fill="#ff0000" />
      <ellipse cx="743" cy="1000" rx="6" ry="6" fill="#0000c0" />
      <CAD x={740} y={969} s={15} len={9} c="#00e000" w={400} t="Y" />
      <CAD x={775} y={1006} s={16} len={10} c="#ff0000" w={400} t="X" />
      {/* bottom axis band */}
      <rect x="694" y="1031" width="964" height="19" fill="#3f556e" />
      <CAD x={828} y={1046} s={21} len={46} w={400} t="23-21" />
      <Circ x={850} y={1038} rx={11} ry={12} />
      <Circ x={958} y={1038} rx={11} ry={12} />
      <CAD x={954} y={1045} s={19} len={10} w={400} t="9" />
      <CAD x={1217} y={1050} s={33} len={53} t="6600" />
      <Circ x={1555} y={1038} rx={11} ry={12} />
      <CAD x={1547} y={1045} s={19} len={17} w={400} t="10" />
      <path d="M1582 224L1615 283H1658M1581 804L1615 862H1658" stroke="#00ffff" fill="none" />
      <CAD x={1623} y={857} s={31} len={36} c="#00ffff" t="RKZ" />
    </svg>
    {/* view cube bar */}
    <div className="absolute right-0 top-0 flex h-[238px] w-[32px] flex-col items-center rounded-b-[3px] bg-[#55585c]">
      <Svg w={30} h={97} vb="0 0 30 97">
        <path d="M6 0a9 9 0 0018 0" stroke="#3d9a50" fill="none" />
        <path d="M15 0a5 5 0 000 7 5 5 0 000-7" stroke="#ddd" />
        <ellipse cx="13" cy="25" rx="11" ry="8" fill="#767a80" stroke="#3a3d40" />
        <circle cx="20" cy="20" r="4.500" fill="#a6aaae" />
        <path d="M4 49h19l3-5v19l-3 4H4zM4 49l4-5h18" stroke="#2b2e33" fill="#42474e" />
        <path d="M4 76h19l3-4v17l-3 4H4zM4 76l4-4h18" stroke="#2b2e33" fill="#42474e" />
      </Svg>
      <span className="mt-[3px] flex"><Caret c="#2b2e33" /></span>
      <Svg w={26} h={22} vb="0 0 26 22" className="mt-[5px]">
        <path d="M1 5h20v16H1zM1 5l4-4h20l-4 4M25 1v16l-4 4" stroke="#2b2e33" fill="#42474e" />
      </Svg>
      <span className="mt-[5px] flex"><Caret c="#2b2e33" /></span>
      <Svg w={24} h={23} vb="0 0 24 23" className="mt-[5px]">
        <path d="M22 12a10 10 0 11-3-8" stroke="#2b2e33" strokeWidth="2" fill="none" />
        <path d="M23 1v8h-8" fill="#2b2e33" />
      </Svg>
      <span className="mt-[4px] flex"><Caret c="#2b2e33" /></span>
      <span className="mt-[5px] h-px w-[22px] bg-[#2b2e33]" />
      <Svg w={24} h={22} vb="0 0 24 22" className="mt-[7px]">
        <rect x="0.500" y="0.500" width="23" height="21" rx="1" stroke="#2b2e33" />
        <path d="M1 5h22M12 5v16M4 9h2M4 13h2M4 17h2M15 9h2M15 13h2M15 17h2M8 9h2M8 13h2M19 9h2M19 13h2" stroke="#2b2e33" />
      </Svg>
    </div>
    <svg className="absolute inset-0" width="964" height="850" viewBox="694 200 964 850">
      <path d="M1615 283H1658" stroke="#00ffff" />
      <CAD x={1623} y={277} s={29} len={35} c="#00ffff" t="RKZ" />
    </svg>
  </div>
)

type Vis = { t: string; l: number; a: "c" | "p" | "e"; d?: boolean; last?: boolean }
const vis: Vis[] = [
  { t: "所有构件", l: 0, a: "p" },
  { t: "轴线", l: 1, a: "c", d: true },
  { t: "轴网", l: 2, a: "c", d: true },
  { t: "辅助轴线", l: 2, a: "c", d: true, last: true },
  { t: "柱", l: 1, a: "c" },
  { t: "柱", l: 2, a: "c" },
  { t: "构造柱", l: 2, a: "c" },
  { t: "砌体柱", l: 2, a: "c", last: true },
  { t: "墙", l: 1, a: "p" },
  { t: "剪力墙", l: 2, a: "c" },
  { t: "人防门框墙", l: 2, a: "c" },
  { t: "砌体墙", l: 2, a: "c" },
  { t: "砌体加筋", l: 2, a: "e" },
  { t: "保温墙", l: 2, a: "c" },
  { t: "暗梁", l: 2, a: "c" },
  { t: "墙垛", l: 2, a: "e" },
  { t: "幕墙", l: 2, a: "c", last: true },
  { t: "门窗洞", l: 1, a: "p" },
  { t: "门", l: 2, a: "c" },
  { t: "窗", l: 2, a: "c" },
  { t: "门联窗", l: 2, a: "c" },
  { t: "墙洞", l: 2, a: "c" },
  { t: "带形窗", l: 2, a: "c" },
  { t: "带形洞", l: 2, a: "c" },
  { t: "飘窗", l: 2, a: "c" },
  { t: "老虎窗", l: 2, a: "e" },
  { t: "过梁", l: 2, a: "e" },
  { t: "壁龛", l: 2, a: "e", last: true },
  { t: "梁", l: 1, a: "p" },
  { t: "梁", l: 2, a: "e" },
  { t: "连梁", l: 2, a: "c" },
  { t: "圈梁", l: 2, a: "e", last: true },
  { t: "板", l: 1, a: "e" },
  { t: "现浇板", l: 2, a: "e" },
  { t: "螺旋板", l: 2, a: "e" },
]

const VisCheck = ({ a }: { a: Vis["a"] }) => {
  if (a === "c")
    return (
      <span className="flex h-[14px] w-[14px] items-center justify-center rounded-[2px] bg-[#5ca7f5]">
        <svg width="10" height="8" viewBox="0 0 10 8"><path d="M1 4l3 3 5-6" stroke="#fff" strokeWidth="1.800" fill="none" /></svg>
      </span>
    )
  if (a === "p")
    return (
      <span className="flex h-[14px] w-[14px] items-center justify-center rounded-[2px] border border-[#8e9092] bg-white">
        <span className="h-[10px] w-[10px] rounded-[2px] bg-[#9cc6f7]" />
      </span>
    )
  return <Cb />
}

const Box = () => (
  <span className="z-10 flex h-[14px] w-[14px] shrink-0 items-center justify-center rounded-[2px] border border-[#8e9092] bg-[#f1f1f1] text-[#222]">
    <Minus size={9} strokeWidth={2} />
  </span>
)

const VisRow = ({ r }: { r: Vis }) => (
  <div className="flex h-[21px] shrink-0 border-b border-[#c6c8ca] text-[12px]">
    <span className={`relative flex w-[118px] items-center border-r border-[#c6c8ca] ${r.l === 0 ? "pl-[2px]" : r.l === 1 ? "pl-[11px]" : "pl-[41px]"}`}>
      {r.l === 1 && <span className="absolute left-[9px] top-[10px] h-px w-[3px] bg-[#c6c8ca]" />}
      {r.l === 2 && <>
        <span className={`absolute left-[18px] top-0 w-px bg-[#c6c8ca] ${r.last ? "h-[11px]" : "h-full"}`} />
        <span className="absolute left-[18px] top-[10px] h-px w-[17px] bg-[#c6c8ca]" />
      </>}
      {r.l < 2 && <Box />}
      <span className={r.l < 2 ? "ml-[5px]" : ""}>{r.t}</span>
    </span>
    <span className="flex w-[63px] items-center justify-center border-r border-[#c6c8ca]"><VisCheck a={r.a} /></span>
    <span className="flex w-[64px] items-center justify-center border-r border-[#c6c8ca]"><Cb dim={r.d} /></span>
  </div>
)

const RightPanel = () => (
  <div className="relative flex min-w-0 flex-1 flex-col bg-[#f0f0f0] border-l border-r border-[#c4c6c9]">
    <PanelBar h="h-[12px]" />
    <div className="flex h-[22px] shrink-0 items-center border-b border-[#cfd0d2] pl-[9px] text-[12px] text-[#555]">显示设置</div>
    <div className="flex h-[30px] shrink-0 items-end gap-[2px] border-b border-[#cfd0d2] pl-[3px] text-[12px]">
      <span className="flex h-[25px] w-[61px] items-center justify-center rounded-t-[3px] border border-b-0 border-[#cfd0d2] bg-white text-[#3f8fe8]">图元显示</span>
      <span className="flex h-[22px] w-[60px] items-center justify-center rounded-t-[3px] bg-[#dedede] text-[#555]">楼层显示</span>
    </div>
    <div className="relative ml-[2px] mt-[3px] flex h-[742px] w-[260px] flex-col overflow-hidden border border-[#c6c8ca] bg-white">
      <div className="flex h-[20px] w-[245px] shrink-0 border-b border-[#c6c8ca] bg-[#eeeeee] text-[12px]">
        <span className="flex w-[118px] items-center justify-center border-r border-[#c6c8ca]">图层构件</span>
        <span className="flex w-[63px] items-center justify-center border-r border-[#c6c8ca]">显示图元</span>
        <span className="flex w-[64px] items-center justify-center border-r border-[#c6c8ca]">显示名称</span>
      </div>
      {vis.map((r, k) => <VisRow key={k} r={r} />)}
      <div className="absolute right-0 top-0 flex h-full w-[14px] flex-col items-center bg-white">
        <svg width="8" height="5" viewBox="0 0 8 5" className="mt-[2px] shrink-0"><path d="M4 0l4 5H0z" fill="#222" /></svg>
        <span className="mt-[2px] h-[258px] w-[7px] shrink-0 rounded-[3px] bg-[#c6c8ca]" />
        <svg width="8" height="5" viewBox="0 0 8 5" className="mb-[2px] mt-auto shrink-0"><path d="M4 5l4-5H0z" fill="#222" /></svg>
      </div>
    </div>
    <div className="ml-[167px] mt-[9px] flex h-[25px] w-[91px] items-center justify-center rounded-[3px] border border-[#d0d0d0] bg-[#f5f5f5] text-[12px] text-[#333]">恢复默认设置</div>
  </div>
)

const Dialog = () => (
  <div className="absolute left-[750px] top-[167px] z-20 flex h-[328px] w-[402px] flex-col bg-[#efefef] text-[12px]">
    <div className="flex h-[27px] shrink-0 items-center justify-between bg-[#2f80e0] pl-[8px] pr-[8px] text-white">
      <span>提示信息</span>
      <X size={12} strokeWidth={2} />
    </div>
    <div className="mx-[14px] mt-[13px] h-[244px] border border-[#b5d4e6] border-t-[#4a7ba0] bg-white pl-[5px] pt-[5px] leading-[18px]">MKQ-1 位置非法,只能布置在直形现浇剪力墙上</div>
    <div className="mr-[14px] mt-[7px] flex h-[23px] w-[74px] items-center justify-center self-end rounded-[2px] bg-[#2f80e0] text-white">关闭</div>
  </div>
)

const StBtn = ({ w, children, cls = "" }: P & { w: string; cls?: string }) => (
  <span className={`flex h-[25px] ${w} items-center justify-center border-2 border-[#a4a6a8] bg-[#d2d3d5] ${cls}`}>{children}</span>
)

const Status = () => (
  <div className="flex h-[30px] shrink-0 items-center bg-[#dcdde0] text-[12px] text-[#333]">
    <span className="ml-[2px] w-[207px]">X = 42537 Y = 23800</span>
    <span className="w-[79px]">层高 : 1</span>
    <span className="w-[136px]">标高 : -9.1~-8.1</span>
    <span className="w-[100px]">0</span>
    <span className="w-[80px]">隐藏 :&nbsp;&nbsp;0</span>
    <div className="flex items-center gap-[3px]">
      <StBtn w="w-[24px]"><Svg s={15}><path d="M3 1v12h10M3 8h4v5" stroke="#333" /></Svg></StBtn>
      <span className="flex h-[26px] w-[36px] items-center justify-center gap-[5px] border-2 border-[#2f9af0] bg-white pl-[1px]">
        <Svg s={16}><rect x="2" y="3" width="12" height="12" stroke="#3f8fdc" /><rect x="0" y="1" width="4" height="4" fill={OR} /></Svg>
        <Caret c="#555" />
      </span>
      <StBtn w="w-[25px]"><Svg s={15}><path d="M1 1l13 13M14 1L1 14" stroke="#999" /></Svg></StBtn>
      <StBtn w="w-[35px]" cls="gap-[6px]"><Svg s={15}><path d="M2 13h12M3 13l8-8" stroke="#333" /><rect x="6" y="7" width="3" height="3" fill="#333" /></Svg><Caret c="#888" /></StBtn>
      <StBtn w="w-[36px]" cls="gap-[5px]"><Svg s={15}><path d="M3 1v6M0 4h6" stroke="#333" /><rect x="5" y="8" width="10" height="4" fill="#333" /></Svg><Caret c="#888" /></StBtn>
      <StBtn w="w-[73px]">跨图层选择</StBtn>
      <StBtn w="w-[61px]">折线选择</StBtn>
    </div>
    <span className="ml-[3px] whitespace-nowrap text-[12.5px]">按鼠标左键指定插入点,按右键结束或 ESC 取消</span>
    <span className="ml-auto mr-[37px]">125 FPS</span>
  </div>
)

export default function App() {
  return (
    <div className="flex h-[1080px] w-[1929px] overflow-hidden bg-[#f0f0f0] font-['Liberation_Sans','Noto_Sans_CJK_SC',sans-serif] text-black">
      {/* sliver of whatever sits behind the window */}
      <div className="flex w-[9px] shrink-0 flex-col">
        <div className="h-[25px] bg-[#8a8a86]" />
        <div className="h-[88px] bg-[#e8e6e1]" />
        <div className="h-[873px] bg-black" />
        <div className="h-[20px] bg-white" />
        <div className="h-[29px] bg-[#e9e9e9]" />
        <div className="flex-1 bg-[#3b3f45]" />
      </div>
      <div className="flex min-w-0 flex-1 flex-col">
        <Header />
        <Ribbon />
        <Toolbar />
        <div className="relative flex min-h-0 flex-1">
          <LeftPanel />
          <div className="ml-[5px] flex w-[539px] shrink-0 flex-col bg-[#f0f0f0]">
            <CompPanel />
            <PropPanel />
          </div>
          <div className="relative w-[5px] shrink-0 bg-[#e4e4e4]">
            <span className="absolute left-0 top-[376px] h-[100px] w-[5px] bg-[#666a70]" />
          </div>
          <Canvas />
          <div className="relative w-[4px] shrink-0 bg-[#e4e4e4]">
            <span className="absolute left-0 top-[376px] h-[100px] w-[4px] bg-[#666a70]" />
          </div>
          <RightPanel />
          <Dialog />
        </div>
        <Status />
      </div>
    </div>
  )
}
